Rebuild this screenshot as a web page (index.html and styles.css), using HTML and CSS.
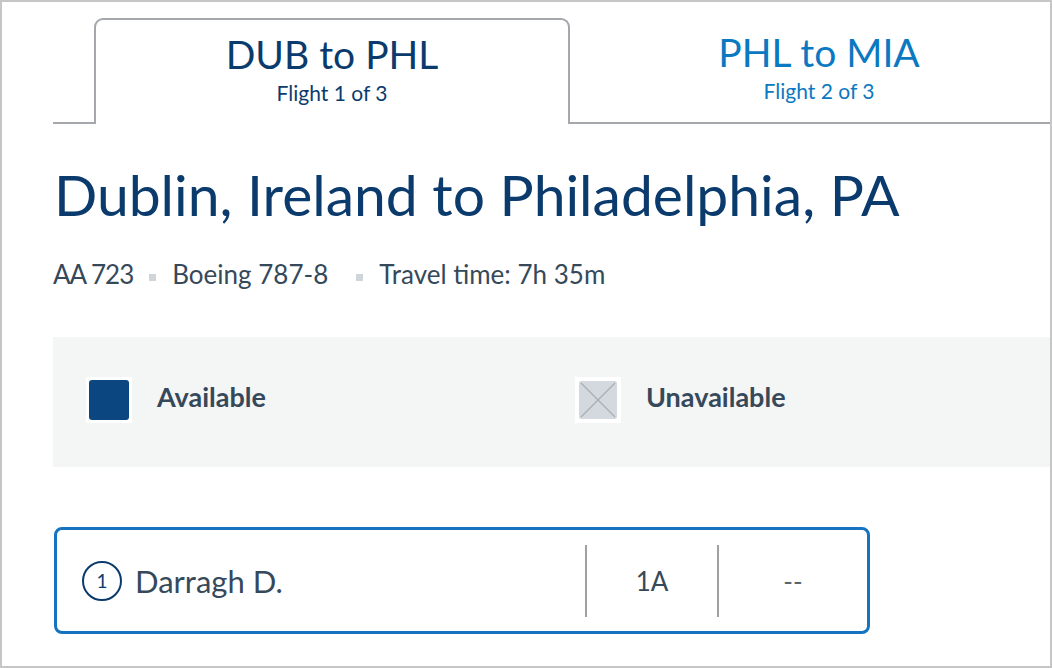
FILE: index.html
```html
<!DOCTYPE html>
<html>
<head>
    <link rel="stylesheet" href="styles.css">
    <title>Choose seats</title>
</head>
<body>
    <div class="frame">
        <div class="tabs">
            <div class="tab-gap"></div>
            <div class="tab tab-active">
                <div class="tab-route">DUB to PHL</div>
                <div class="tab-step">Flight 1 of 3</div>
            </div>
            <div class="tab">
                <div class="tab-route">PHL to MIA</div>
                <div class="tab-step">Flight 2 of 3</div>
            </div>
        </div>

        <h1 class="route-title">Dublin, Ireland to Philadelphia, PA</h1>

        <ul class="flight-info">
            <li>AA 723</li>
            <li>Boeing 787-8</li>
            <li>Travel time: 7h 35m</li>
        </ul>

        <!-- Seat legend -->
        <div class="legend">
            <div class="legend-item">
                <span class="seat-icon"><span class="seat seat-open"></span></span>
                <span class="legend-label">Available</span>
            </div>
            <div class="legend-item">
                <span class="seat-icon">
                    <svg class="seat seat-taken" width="38" height="38" viewBox="0 0 38 38">
                        <rect x="0" y="0" width="38" height="38" rx="2" fill="#d3d9df"/>
                        <line x1="2" y1="2" x2="36" y2="36" stroke="#a7adb3" stroke-width="1.2"/>
                        <line x1="36" y1="2" x2="2" y2="36" stroke="#a7adb3" stroke-width="1.2"/>
                    </svg>
                </span>
                <span class="legend-label">Unavailable</span>
            </div>
        </div>

        <!-- Passenger row -->
        <div class="passenger">
            <div class="passenger-name">
                <span class="passenger-num">1</span>
                Darragh D.
            </div>
            <div class="passenger-seat">1A</div>
            <div class="passenger-extra">--</div>
        </div>
    </div>
</body>
</html>
```

FILE: styles.css
```css
* {
    margin: 0;
    padding: 0;
    box-sizing: border-box;
}

body {
    font-family: Lato, "Open Sans", Arial, sans-serif;
    background-color: #fff;
    color: #36495a;
}

.frame {
    width: 1052px;
    height: 668px;
    border: 2px solid #c6c6c6;
    padding: 16px 0 0 51px;
    overflow: hidden;
}

/* Flight tabs */
.tabs {
    display: flex;
    height: 106px;
}

.tab-gap {
    flex: 0 0 41px;
    border-bottom: 2px solid #a4a8ac;
}

.tab {
    flex: 0 0 498px;
    text-align: center;
    padding-top: 12px;
    border-bottom: 2px solid #a4a8ac;
    color: #0b78c2;
}

.tab-active {
    flex: 0 0 476px;
    border: 2px solid #a4a8ac;
    border-bottom: none;
    border-radius: 9px 9px 0 0;
    color: #0b3b6d;
}

.tab-route {
    font-size: 39px;
    line-height: 44px;
}

.tab-step {
    font-size: 21px;
    line-height: 26px;
    margin-top: 4px;
}

/* Title and flight details */
.route-title {
    font-size: 57px;
    font-weight: normal;
    color: #0b3b6d;
    line-height: 64px;
    margin-top: 38px;
    margin-left: 1px;
}

.flight-info {
    list-style: none;
    display: flex;
    align-items: center;
    margin-top: 33px;
    font-size: 26px;
    line-height: 30px;
}

.flight-info li:first-child {
    letter-spacing: -1px;
}

.flight-info li + li::before {
    content: "";
    display: inline-block;
    width: 7px;
    height: 7px;
    background-color: #d0d5da;
    margin: 0 16px 0 16px;
    vertical-align: middle;
}

.flight-info li:last-child::before {
    margin-left: 28px;
}

/* Legend */
.legend {
    display: grid;
    grid-template-columns: 489px 1fr;
    align-items: center;
    margin-top: 48px;
    height: 130px;
    padding: 0 0 4px 33px;
    background-color: #f4f5f5;
}

.legend-item {
    display: flex;
    align-items: center;
    gap: 25px;
}

.seat-icon {
    display: flex;
    align-items: center;
    justify-content: center;
    width: 46px;
    height: 46px;
    background-color: #fff;
}

.seat {
    display: block;
    width: 38px;
    height: 38px;
}

.seat-open {
    width: 40px;
    height: 40px;
    background-color: #0b4680;
    border-radius: 3px;
}

.legend-label {
    font-size: 27px;
    font-weight: bold;
    padding-bottom: 8px;
}

/* Passenger card */
.passenger {
    display: flex;
    align-items: center;
    width: 816px;
    height: 107px;
    margin-top: 60px;
    margin-left: 1px;
    border: 3px solid #1673bf;
    border-radius: 8px;
    font-size: 26px;
}

.passenger-name {
    flex: 1;
    display: flex;
    align-items: center;
    gap: 13px;
    padding-left: 25px;
    font-size: 31px;
}

.passenger-num {
    display: flex;
    align-items: center;
    justify-content: center;
    width: 40px;
    height: 40px;
    border: 2px solid #0b3b6d;
    border-radius: 50%;
    font-size: 19px;
    color: #0b3b6d;
}

.passenger-seat,
.passenger-extra {
    text-align: center;
    border-left: 2px solid #a0a0a0;
    line-height: 72px;
}

.passenger-seat {
    width: 132px;
}

.passenger-extra {
    width: 150px;
    color: #5a6570;
}
```
